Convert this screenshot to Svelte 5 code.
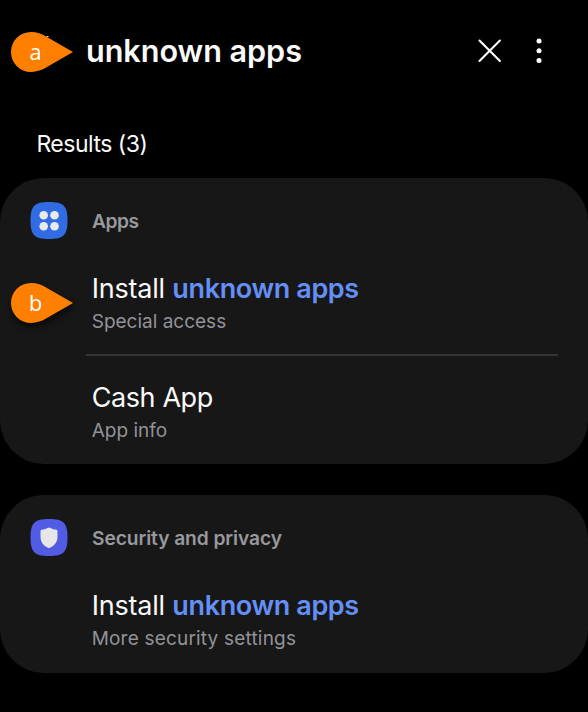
<script>
  const groups = [
    {
      title: 'Apps',
      icon: 'apps',
      rows: [
        { lead: 'Install ', match: 'unknown apps', sub: 'Special access' },
        { lead: 'Cash App', match: '', sub: 'App info' },
      ],
    },
    {
      title: 'Security and privacy',
      icon: 'shield',
      rows: [{ lead: 'Install ', match: 'unknown apps', sub: 'More security settings' }],
    },
  ];
  const markers = [
    { label: 'a', top: 26 },
    { label: 'b', top: 277 },
  ];
</script>

<main>
  <header>
    <h1>unknown apps</h1>
    <svg class="close" width="26" height="26" viewBox="0 0 26 26" aria-label="Clear">
      <path d="M2.5 2.5 22.9 22.9M22.9 2.5 2.5 22.9" stroke="#fff" stroke-width="2.1" stroke-linecap="round" />
    </svg>
    <svg class="more" width="8" height="26" viewBox="0 0 8 26" fill="#fff" aria-label="More options">
      <circle cx="4" cy="3" r="2.5" /><circle cx="4" cy="12.7" r="2.5" /><circle cx="4" cy="22.4" r="2.5" />
    </svg>
  </header>

  <p class="results">Results (3)</p>

  {#each groups as g}
    <section>
      <div class="group">
        <svg width="38" height="38" viewBox="0 0 38 38">
          <path
            d="M19 .1C33.5 .1 37.5 4.1 37.5 18.6S33.5 37.1 19 37.1.5 33.1.5 18.6 4.5.1 19 .1Z"
            fill={g.icon === 'apps' ? '#326ce5' : '#525be3'}
          />
          {#if g.icon === 'apps'}
            <g fill="#e9eaec">
              <circle cx="13.7" cy="13.2" r="4.3" /><circle cx="24.5" cy="13.2" r="4.3" />
              <circle cx="13.7" cy="24.2" r="4.3" /><circle cx="24.5" cy="24.2" r="4.3" />
            </g>
          {:else}
            <path
              d="M19 8.6Q19.6 8.6 20.4 9Q23.2 10.4 26.5 10.8Q27.5 11 27.5 12.1V18C27.5 23.1 24.4 26.7 20.2 28.7Q19 29.3 17.8 28.7C13.6 26.7 10.5 23.1 10.5 18V12.1Q10.5 11 11.5 10.8Q14.8 10.4 17.6 9Q18.4 8.6 19 8.6Z"
              fill="#e6e6e8"
            />
          {/if}
        </svg>
        <h2 class={g.icon}>{g.title}</h2>
      </div>
      {#each g.rows as r}
        <div class="row">
          <div class="name" class:plain={!r.match}>{r.lead}{#if r.match}<b>{r.match}</b>{/if}</div>
          <div class="sub" class:wide={g.icon === 'shield'}>{r.sub}</div>
        </div>
      {/each}
    </section>
  {/each}

  {#each markers as m}
    <div class="marker" style="top:{m.top}px">
      <svg width="76" height="56" viewBox="0 0 76 56">
        {#if m.label === 'a'}<path d="M42.5 10.5h2" stroke="#ddd" stroke-width="1" />{/if}
        <path d="M27 6C33 6 38 8 42.5 10.7L69 26 42.5 41.3C38 44 33 46 27 46A20 20 0 0 1 27 6Z" fill="#ff8000" />
      </svg>
      <span>{m.label}</span>
    </div>
  {/each}
</main>

<style>
  :global(body) { background: #000; }
  main {
    position: relative;
    width: 588px;
    height: 712px;
    overflow: hidden;
    background: #000;
    color: #fafafa;
    font-family: Inter, "Liberation Sans", sans-serif;
  }
  header {
    display: flex;
    align-items: center;
    height: 101px;
    padding: 0 45px 0 86px;
  }
  h1 {
    flex: 1;
    margin: 0;
    padding-top: 1px;
    font-size: 30.6px;
    font-weight: 600;
    line-height: 40px;
    letter-spacing: -0.04px;
  }
  .close { margin-right: 32px; }
  .results {
    margin: 0 0 19px 36.4px;
    padding-top: 28px;
    font-size: 23px;
    line-height: 30px;
    letter-spacing: -0.5px;
  }
  section {
    box-sizing: border-box;
    height: 286px;
    margin: 0 0 31px;
    padding-top: 24px;
    border-radius: 44px;
    background: #171718;
  }
  section + section { height: 178px; }
  .group {
    display: flex;
    align-items: center;
    gap: 24px;
    height: 38px;
    padding-left: 30px;
  }
  h2 {
    margin: 0;
    color: #98989d;
    font-size: 19.2px;
    font-weight: 600;
    line-height: 26px;
    letter-spacing: -0.08px;
  }
  h2.apps { letter-spacing: -0.5px; }
  .row {
    box-sizing: border-box;
    height: 109px;
    margin: 0 30px 0 86px;
    padding: 31px 0 0 5.7px;
  }
  .row + .row { padding-top: 24px; border-top: 2px solid #353537; }
  .row:nth-child(2) { height: 114px; }
  .name {
    font-size: 27px;
    line-height: 36px;
    letter-spacing: -0.2px;
    white-space: pre;
  }
  .name.plain { letter-spacing: -0.4px; }
  b { color: #648ff5; font-weight: 600; letter-spacing: -0.38px; }
  .sub {
    color: #929297;
    font-size: 19px;
    line-height: 30px;
  }
  .sub.wide { letter-spacing: 0.19px; }
  .marker {
    position: absolute;
    left: 4px;
    width: 76px;
    height: 56px;
    filter: drop-shadow(1px 4px 3px rgba(0, 0, 0, 0.65));
  }
  .marker svg { display: block; }
  .marker span {
    position: absolute;
    left: 17px;
    top: 10px;
    width: 29px;
    color: #fff;
    font: 22px/30px "Noto Sans", sans-serif;
    text-align: center;
  }
</style>
